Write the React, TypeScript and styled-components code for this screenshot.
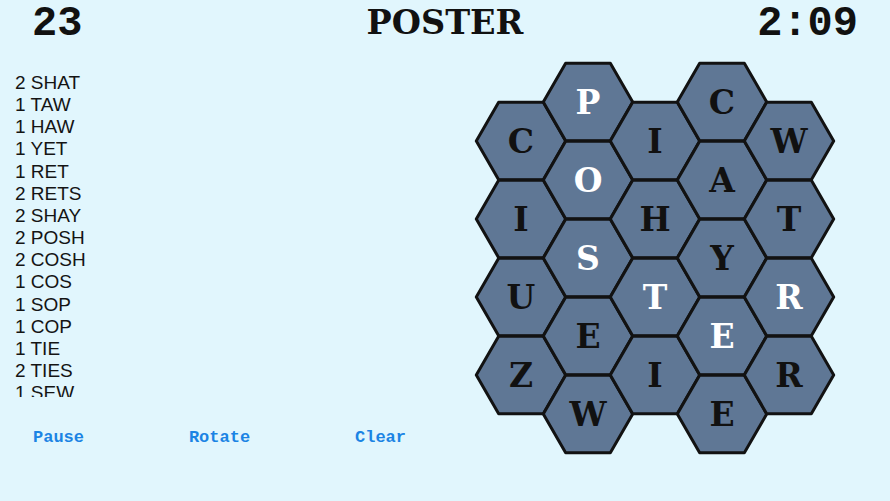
import React from "react";
import styled, { createGlobalStyle } from "styled-components";

const GlobalStyle = createGlobalStyle`
  html, body {
    margin: 0;
    padding: 0;
    background: #e1f6fd;
  }
  body {
    font-family: "Liberation Sans", Arial, sans-serif;
  }
`;

const Page = styled.div`
  width: 890px;
  height: 501px;
  background: #e1f6fd;
  overflow: hidden;
`;

const Header = styled.header`
  display: grid;
  grid-template-columns: 1fr auto 1fr;
  align-items: start;
  height: 48px;
  padding: 0 32px;
  color: #111;
`;

const Score = styled.div<{ $align: "left" | "right" }>`
  font-family: "Liberation Mono", "Courier New", monospace;
  font-weight: bold;
  font-size: 42px;
  line-height: 48px;
  text-align: ${(p) => p.$align};
  white-space: nowrap;
`;

const Title = styled.div`
  font-family: "DejaVu Serif", "Liberation Serif", serif;
  font-weight: bold;
  font-size: 33.5px;
  line-height: 48px;
  white-space: nowrap;
  transform: translateY(-1px);
`;

const Main = styled.div`
  display: flex;
  align-items: flex-start;
`;

const LeftColumn = styled.div`
  width: 473px;
  flex: none;
  box-sizing: border-box;
  padding: 24px 0 0 15px;
  display: flex;
  flex-direction: column;
`;

const WordList = styled.ul`
  list-style: none;
  margin: 0;
  padding: 0;
  height: 325px;
  overflow: hidden;
  font-family: "Liberation Sans", Arial, sans-serif;
  font-size: 19px;
  line-height: 22.15px;
  color: #141414;
`;

const WordItem = styled.li`
  white-space: nowrap;
`;

const Controls = styled.div`
  display: flex;
  justify-content: space-between;
  width: 373px;
  margin: 31px 0 0 18px;
`;

const ControlButton = styled.button`
  background: none;
  border: none;
  padding: 0;
  margin: 0;
  font-family: "Liberation Mono", "Courier New", monospace;
  font-weight: bold;
  font-size: 17px;
  line-height: 20px;
  color: #1b84e4;
  cursor: pointer;
`;

const Board = styled.svg`
  display: block;
  margin-top: 11px;
  flex: none;
`;

const HexLetter = styled.text<{ $active: boolean }>`
  font-family: "DejaVu Serif", "Liberation Serif", serif;
  font-weight: bold;
  font-size: 33px;
  fill: ${(p) => (p.$active ? "#ffffff" : "#111111")};
`;

const words = [
  "2 SHAT",
  "1 TAW",
  "1 HAW",
  "1 YET",
  "1 RET",
  "2 RETS",
  "2 SHAY",
  "2 POSH",
  "2 COSH",
  "1 COS",
  "1 SOP",
  "1 COP",
  "1 TIE",
  "2 TIES",
  "1 SEW",
];

const columns: { l: string; a: boolean }[][] = [
  [
    { l: "C", a: false },
    { l: "I", a: false },
    { l: "U", a: false },
    { l: "Z", a: false },
  ],
  [
    { l: "P", a: true },
    { l: "O", a: true },
    { l: "S", a: true },
    { l: "E", a: false },
    { l: "W", a: false },
  ],
  [
    { l: "I", a: false },
    { l: "H", a: false },
    { l: "T", a: true },
    { l: "I", a: false },
  ],
  [
    { l: "C", a: false },
    { l: "A", a: false },
    { l: "Y", a: false },
    { l: "E", a: true },
    { l: "E", a: false },
  ],
  [
    { l: "W", a: false },
    { l: "T", a: false },
    { l: "R", a: true },
    { l: "R", a: false },
  ],
];

const R = 44.7;
const H = 38.7;

function hexPoints(cx: number, cy: number) {
  const pts = [
    [cx - R, cy],
    [cx - R / 2, cy - H],
    [cx + R / 2, cy - H],
    [cx + R, cy],
    [cx + R / 2, cy + H],
    [cx - R / 2, cy + H],
  ];
  return pts.map((p) => p.map((v) => v.toFixed(2)).join(",")).join(" ");
}

export default function App() {
  const cells: { cx: number; cy: number; l: string; a: boolean; key: string }[] = [];
  columns.forEach((col, c) => {
    const cx = 48 + 67 * c;
    const baseY = c % 2 === 0 ? 82 : 43;
    col.forEach((cell, r) => {
      cells.push({ cx, cy: baseY + 78 * r, l: cell.l, a: cell.a, key: `${c}-${r}` });
    });
  });

  return (
    <Page>
      <GlobalStyle />
      <Header>
        <Score $align="left">23</Score>
        <Title>POSTER</Title>
        <Score $align="right">2:09</Score>
      </Header>
      <Main>
        <LeftColumn>
          <WordList>
            {words.map((w, i) => (
              <WordItem key={i}>{w}</WordItem>
            ))}
          </WordList>
          <Controls>
            <ControlButton>Pause</ControlButton>
            <ControlButton>Rotate</ControlButton>
            <ControlButton>Clear</ControlButton>
          </Controls>
        </LeftColumn>
        <Board width="364" height="398" viewBox="0 0 364 398">
          {cells.map((c) => (
            <polygon
              key={"p" + c.key}
              points={hexPoints(c.cx, c.cy)}
              fill="#5f7795"
              stroke="#121212"
              strokeWidth="3"
              strokeLinejoin="round"
            />
          ))}
          {cells.map((c) => (
            <HexLetter
              key={"t" + c.key}
              $active={c.a}
              x={c.cx}
              y={c.cy + 12}
              textAnchor="middle"
            >
              {c.l}
            </HexLetter>
          ))}
        </Board>
      </Main>
    </Page>
  );
}
